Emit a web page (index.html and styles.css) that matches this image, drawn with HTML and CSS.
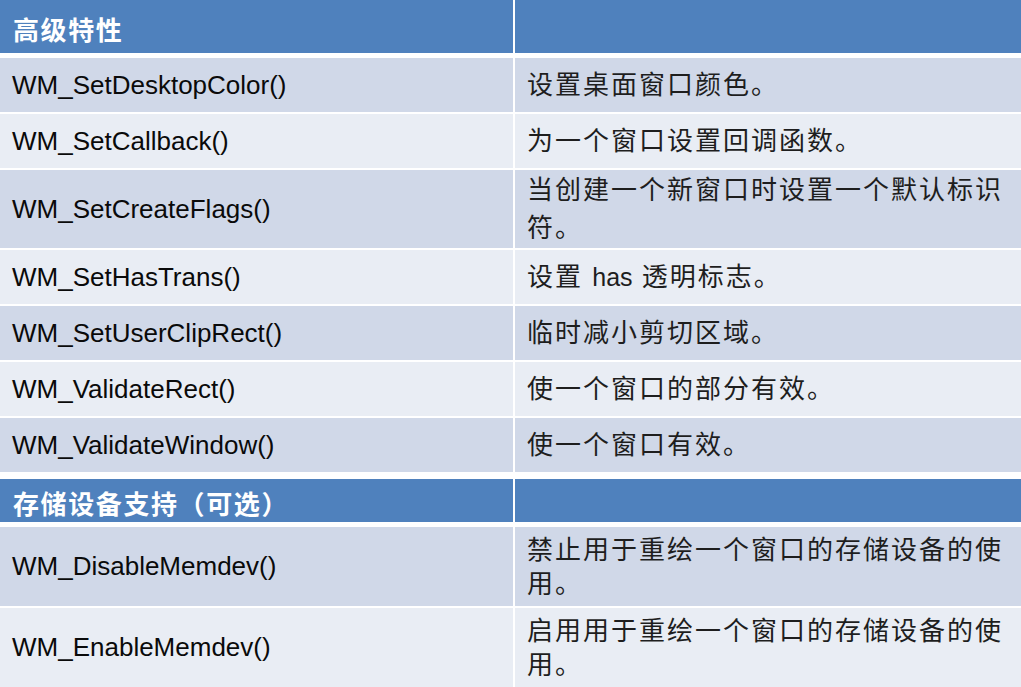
FILE: index.html
```html
<!DOCTYPE html>
<html lang="zh-CN">
<head>
<meta charset="utf-8">
<title>WM API</title>
<link rel="stylesheet" href="styles.css">
</head>
<body>
<div class="table">
  <div class="row head head-first">
    <div class="cell">高级特性</div>
    <div class="cell"></div>
  </div>
  <div class="row dark">
    <div class="cell fn">WM_SetDesktopColor()</div>
    <div class="cell desc">设置桌面窗口颜色。</div>
  </div>
  <div class="row light">
    <div class="cell fn">WM_SetCallback()</div>
    <div class="cell desc">为一个窗口设置回调函数。</div>
  </div>
  <div class="row dark tall">
    <div class="cell fn">WM_SetCreateFlags()</div>
    <div class="cell desc loose">当创建一个新窗口时设置一个默认标识符。</div>
  </div>
  <div class="row light">
    <div class="cell fn">WM_SetHasTrans()</div>
    <div class="cell desc"><span>设置 <span class="latin">has</span> 透明标志。</span></div>
  </div>
  <div class="row dark">
    <div class="cell fn">WM_SetUserClipRect()</div>
    <div class="cell desc">临时减小剪切区域。</div>
  </div>
  <div class="row light">
    <div class="cell fn">WM_ValidateRect()</div>
    <div class="cell desc">使一个窗口的部分有效。</div>
  </div>
  <div class="row dark">
    <div class="cell fn">WM_ValidateWindow()</div>
    <div class="cell desc">使一个窗口有效。</div>
  </div>
  <div class="row head head-second">
    <div class="cell">存储设备支持（可选）</div>
    <div class="cell"></div>
  </div>
  <div class="row dark taller">
    <div class="cell fn">WM_DisableMemdev()</div>
    <div class="cell desc">禁止用于重绘一个窗口的存储设备的使用。</div>
  </div>
  <div class="row light taller">
    <div class="cell fn">WM_EnableMemdev()</div>
    <div class="cell desc">启用用于重绘一个窗口的存储设备的使用。</div>
  </div>
</div>
</body>
</html>
```
FILE: styles.css
```css
html, body {
  margin: 0;
  padding: 0;
  background: #ffffff;
}

body {
  width: 1021px;
  height: 687px;
  overflow: hidden;
  font-family: "Liberation Sans", "Noto Sans CJK SC", sans-serif;
}

.table {
  display: flex;
  flex-direction: column;
  gap: 2px;
}

.row {
  display: grid;
  grid-template-columns: 513px 506px;
  column-gap: 2px;
  height: 54px;
}

.cell {
  display: flex;
  align-items: center;
  padding: 0 0 0 12px;
  box-sizing: border-box;
}

.head {
  height: 53px;
}

.head .cell {
  background: #4f81bd;
  color: #ffffff;
  font-family: "Noto Sans CJK SC", sans-serif;
  font-weight: 700;
  font-size: 26px;
  letter-spacing: 1.6px;
  padding-left: 13px;
  padding-top: 3px;
}

.head-first {
  margin-bottom: 3px;
}

.head-second {
  height: 43px;
  margin-top: 5px;
  margin-bottom: 3px;
}

.dark .cell {
  background: #d0d8e8;
}

.light .cell {
  background: #e9edf4;
}

.tall {
  height: 78px;
}

.taller {
  height: 79px;
}

.fn {
  font-family: "Liberation Sans", sans-serif;
  font-size: 26px;
  color: #0a0a0a;
}

.desc {
  font-family: "Liberation Sans", "Noto Sans CJK SC", sans-serif;
  font-size: 26px;
  letter-spacing: 2px;
  line-height: 34px;
  color: #1e1e1e;
}

.latin {
  letter-spacing: 0;
  font-size: 25px;
}

.loose {
  line-height: 38px;
}
```
